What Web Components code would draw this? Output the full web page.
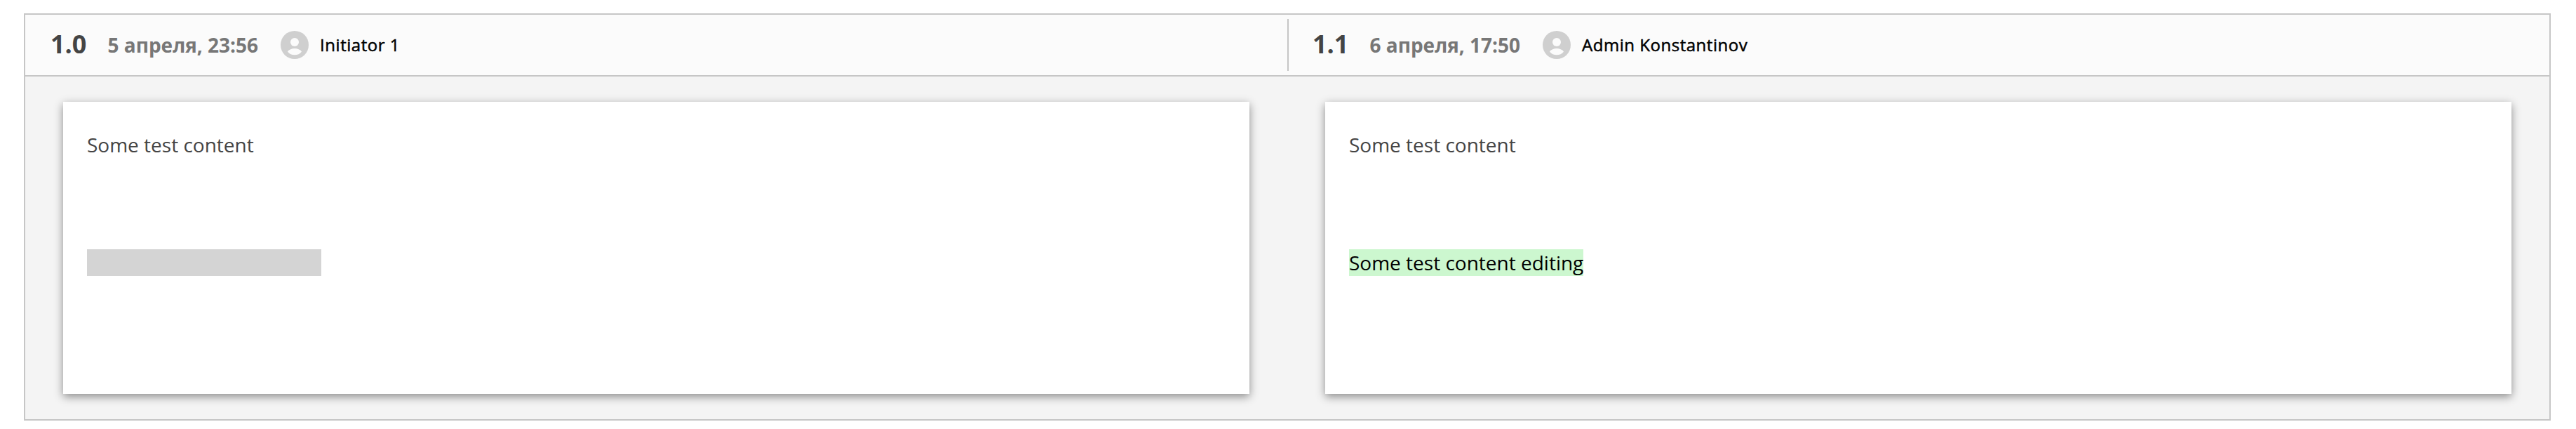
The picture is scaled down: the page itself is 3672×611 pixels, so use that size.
<!DOCTYPE html>
<html lang="ru">
<head>
<meta charset="utf-8">
<title>Сравнение версий</title>
<style>
body { margin: 0; background: #fff; font-family: "Open Sans", "Noto Sans", sans-serif; }
</style>
</head>
<body>
<version-compare>
  <version-head slot="head" version="1.0" date="5 апреля, 23:56" author="Initiator 1"></version-head>
  <version-head slot="head" version="1.1" date="6 апреля, 17:50" author="Admin Konstantinov"></version-head>
  <version-page>
    <diff-line>Some test content</diff-line>
    <diff-line kind="removed"></diff-line>
  </version-page>
  <version-page>
    <diff-line>Some test content</diff-line>
    <diff-line kind="added">Some test content editing</diff-line>
  </version-page>
</version-compare>
<script>
function define(name, html, setup) {
  customElements.define(name, class extends HTMLElement {
    connectedCallback() {
      if (this.shadowRoot) return;
      this.attachShadow({ mode: "open" }).innerHTML = html;
      if (setup) setup(this, this.shadowRoot);
    }
  });
}

define("user-avatar", `
<style>
:host { display: block; width: 40px; height: 40px; }
svg { display: block; width: 100%; height: 100%; }
</style>
<svg viewBox="0 0 40 40"><circle cx="20" cy="20" r="20" fill="#cfcfcf"/><circle cx="20" cy="16" r="6" fill="#fbfbfb"/><path d="M10 29.5C12 26.5 16 25 20 25S28 26.5 30 29.5C27.500 32.800 24 34.300 20 34.300S12.500 32.800 10 29.500Z" fill="#fbfbfb"/></svg>`);

define("version-head", `
<style>
:host { display: flex; align-items: center; height: 86px; padding-left: 36px; box-sizing: border-box; white-space: nowrap; }
.version { margin-bottom: 2px; font-size: 36px; line-height: 50px; font-weight: 700; color: #444; }
.date { margin-left: 30px; font-size: 28px; line-height: 38px; font-weight: 700; color: #777; }
user-avatar { margin-left: 32px; }
.author { margin-left: 16px; font-size: 24px; line-height: 34px; font-weight: 400; letter-spacing: .52px; -webkit-text-stroke: .5px #000; color: #000; }
</style>
<span class="version"></span><span class="date"></span><user-avatar></user-avatar><span class="author"></span>`,
(host, root) => {
  for (const key of ["version", "date", "author"]) root.querySelector("." + key).textContent = host.getAttribute(key);
});

define("diff-line", `
<style>
:host { display: block; height: 38px; font-size: 28px; line-height: 38px; color: #444; white-space: nowrap; }
span { display: inline-block; height: 38px; }
:host([kind="added"]) span { background: #ccf7cf; color: #000; }
:host([kind="removed"]) span { width: 334px; background: #d4d4d4; }
</style>
<span><slot></slot></span>`);

define("version-page", `
<style>
:host { display: flex; flex-direction: column; gap: 130px; height: 416px; box-sizing: border-box; padding: 42px 34px; background: #fff; box-shadow: 0 4px 12px rgba(0,0,0,.43); }
</style>
<slot></slot>`);

define("version-compare", `
<style>
:host { display: block; margin: 19px 36px 12px 34px; border: 2px solid #c6c6c6; background: #f4f4f4; }
header { display: grid; grid-template-columns: 1fr 1fr; position: relative; background: #fbfbfb; border-bottom: 2px solid #c6c6c6; }
.divider { position: absolute; left: 50%; top: 6px; bottom: 6px; width: 2px; background: #c6c6c6; }
main { display: grid; grid-template-columns: 1fr 1fr; gap: 108px; padding: 36px 54px; }
</style>
<header><slot name="head"></slot><i class="divider"></i></header>
<main><slot></slot></main>`);
</script>
</body>
</html>
